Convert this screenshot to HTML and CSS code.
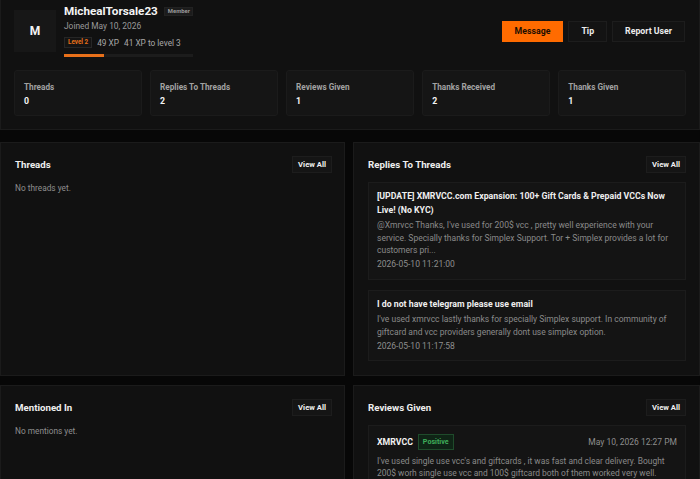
FILE: index.html
```html
<!DOCTYPE html>
<html lang="en">
<head>
<meta charset="utf-8">
<title>MichealTorsale23 - Profile</title>
<link rel="stylesheet" href="styles.css">
</head>
<body>
<div class="page">
  <section class="profile">
    <div class="profile-top">
      <div class="avatar">M</div>
      <div class="info">
        <div class="name-row">
          <span class="name">MichealTorsale23</span>
          <span class="role">Member</span>
        </div>
        <div class="joined">Joined May 10, 2026</div>
        <div class="level-row">
          <span class="level">Level 2</span>
          <span class="xp">49 XP</span>
          <span class="xp">41 XP to level 3</span>
        </div>
        <div class="progress"><div class="progress-fill" style="width:31%"></div></div>
      </div>
      <div class="actions">
        <button class="btn btn-primary">Message</button>
        <button class="btn">Tip</button>
        <button class="btn">Report User</button>
      </div>
    </div>
    <div class="stats">
      <div class="stat"><div class="stat-label">Threads</div><div class="stat-value">0</div></div>
      <div class="stat"><div class="stat-label">Replies To Threads</div><div class="stat-value">2</div></div>
      <div class="stat"><div class="stat-label">Reviews Given</div><div class="stat-value">1</div></div>
      <div class="stat"><div class="stat-label">Thanks Received</div><div class="stat-value">2</div></div>
      <div class="stat"><div class="stat-label">Thanks Given</div><div class="stat-value">1</div></div>
    </div>
  </section>

  <main class="grid">
    <section class="panel">
      <div class="panel-head">
        <h2 class="panel-title">Threads</h2>
        <button class="view-all">View All</button>
      </div>
      <p class="empty">No threads yet.</p>
    </section>

    <section class="panel panel-right">
      <div class="panel-head">
        <h2 class="panel-title">Replies To Threads</h2>
        <button class="view-all">View All</button>
      </div>
      <div class="item-list">
        <article class="card">
          <div class="card-title">[UPDATE] XMRVCC.com Expansion: 100+ Gift Cards &amp; Prepaid VCCs Now Live! (No KYC)</div>
          <div class="card-body">@Xmrvcc Thanks, I've used for 200$ vcc , pretty well experience with your service. Specially thanks for Simplex Support. Tor + Simplex provides a lot for customers pri...</div>
          <div class="card-date">2026-05-10 11:21:00</div>
        </article>
        <article class="card">
          <div class="card-title">I do not have telegram please use email</div>
          <div class="card-body">I've used xmrvcc lastly thanks for specially Simplex support. In community of giftcard and vcc providers generally dont use simplex option.</div>
          <div class="card-date">2026-05-10 11:17:58</div>
        </article>
      </div>
    </section>

    <section class="panel">
      <div class="panel-head">
        <h2 class="panel-title">Mentioned In</h2>
        <button class="view-all">View All</button>
      </div>
      <p class="empty">No mentions yet.</p>
    </section>

    <section class="panel panel-right">
      <div class="panel-head">
        <h2 class="panel-title">Reviews Given</h2>
        <button class="view-all">View All</button>
      </div>
      <div class="item-list">
        <article class="card review">
          <div class="review-head">
            <span class="review-name">XMRVCC</span>
            <span class="badge-positive">Positive</span>
            <span class="review-date">May 10, 2026 12:27 PM</span>
          </div>
          <div class="review-body">I've used single use vcc's and giftcards , it was fast and clear delivery. Bought 200$ worh single use vcc and 100$ giftcard both of them worked very well.</div>
        </article>
      </div>
    </section>
  </main>
</div>
</body>
</html>
```

FILE: styles.css
```css
html {
  overflow: hidden;
}

body {
  margin: 0;
  background: #070707;
  color: #eeeeee;
  font-family: Roboto, "Liberation Sans", Arial, sans-serif;
}

.page {
  width: 700px;
}

/* ---------- profile header ---------- */
.profile {
  background: #111111;
  border: 1px solid #1b1b1b;
  border-top: 0;
  padding: 2px 13px 13px 13px;
}

.profile-top {
  display: flex;
  align-items: center;
}

.avatar {
  width: 42px;
  height: 42px;
  background: #171717;
  display: flex;
  align-items: center;
  justify-content: center;
  font-size: 12px;
  font-weight: 700;
  color: #f2f2f2;
  margin-right: 8px;
  flex-shrink: 0;
}

.info {
  display: flex;
  flex-direction: column;
  padding-bottom: 3px;
}

.name-row {
  display: flex;
  align-items: center;
  height: 18px;
}

.name {
  font-size: 11.7px;
  font-weight: 700;
  color: #f4f4f4;
  line-height: 18px;
}

.role {
  margin-left: 6.5px;
  font-size: 5.9px;
  font-weight: 700;
  color: #9a9a9a;
  background: #1c1c1c;
  border: 1px solid #222;
  padding: 0 2.5px;
  line-height: 7px;
  margin-top: 1px;
}

.joined {
  font-size: 8.4px;
  line-height: 13px;
  color: #9a9a9a;
}

.level-row {
  display: flex;
  align-items: center;
  margin-top: 4px;
  height: 11px;
}

.level {
  font-size: 6.3px;
  font-weight: 700;
  color: #e8701a;
  background: #141414;
  border: 1px solid #262626;
  padding: 0 3px;
  line-height: 9px;
  margin-right: 5px;
}

.xp {
  font-size: 8.3px;
  color: #a8a8a8;
  margin-right: 5px;
}

.progress {
  margin-top: 6px;
  height: 3px;
  background: #1c1c1c;
}

.progress-fill {
  height: 100%;
  background: #e8701a;
}

.actions {
  margin-left: auto;
  display: flex;
  gap: 5px;
  margin-right: 1px;
}

.btn {
  font-family: inherit;
  font-size: 8.75px;
  font-weight: 700;
  height: 21px;
  padding: 0 12px;
  background: #131313;
  border: 1px solid #1d1d1d;
  color: #ececec;
  cursor: pointer;
}

.btn-primary {
  background: #ff6b00;
  border-color: #ff6b00;
  color: #1d0e00;
}

/* ---------- stats ---------- */
.stats {
  display: grid;
  grid-template-columns: repeat(5, 1fr);
  gap: 8.3px;
  margin-top: 9.5px;
}

.stat {
  background: #151515;
  border: 1px solid #1b1b1b;
  border-radius: 3px;
  padding: 10.5px 9px 8px;
}

.stat-label {
  font-size: 8.2px;
  font-weight: 700;
  line-height: 12px;
  color: #a2a2a2;
}

.stat-value {
  font-size: 8.75px;
  font-weight: 700;
  line-height: 12px;
  color: #f4f4f4;
  margin-top: 2.3px;
}

/* ---------- panels ---------- */
.grid {
  display: grid;
  grid-template-columns: 345px 1fr;
  gap: 8.3px 8px;
  margin-top: 11.6px;
}

.panel {
  background: #111111;
  border: 1px solid #1b1b1b;
  padding: 13px 12px 14px 14px;
}

.panel-right {
  padding-right: 13px;
}

.panel-head {
  display: flex;
  align-items: center;
  justify-content: space-between;
  height: 17px;
  margin-bottom: 9.5px;
}

.panel-title {
  margin: 0;
  font-size: 9.7px;
  font-weight: 700;
  color: #efefef;
}

.view-all {
  font-family: inherit;
  font-size: 7.66px;
  font-weight: 700;
  height: 17px;
  padding: 0 5px;
  background: #151515;
  border: 1px solid #1d1d1d;
  color: #efefef;
}

.empty {
  margin: 0;
  font-size: 8.3px;
  line-height: 12.4px;
  color: #8e8e8e;
}

.item-list {
  display: flex;
  flex-direction: column;
  gap: 10px;
}

.card {
  background: #141414;
  border: 1px solid #1c1c1c;
  padding: 7px 8px 8px;
}

.card-title {
  font-size: 8.75px;
  font-weight: 700;
  line-height: 13.4px;
  color: #efefef;
}

.card-body {
  font-size: 8.5px;
  line-height: 12.4px;
  color: #8a8a8a;
  margin-top: 2px;
}

.card-date {
  font-size: 8.5px;
  line-height: 12.4px;
  color: #8e8e8e;
  margin-top: 2px;
}

.review {
  padding-top: 8px;
}

.review-head {
  display: flex;
  align-items: center;
  height: 16px;
}

.review-name {
  font-size: 8.75px;
  font-weight: 700;
  color: #f2f2f2;
  margin-right: 5px;
}

.badge-positive {
  font-size: 7.1px;
  font-weight: 700;
  color: #3fae5a;
  background: #0f2416;
  border: 1px solid #1f4b2b;
  padding: 0 4px;
  line-height: 14px;
}

.review-date {
  margin-left: auto;
  font-size: 8.5px;
  color: #8e8e8e;
}

.review-body {
  margin-top: 5px;
  font-size: 8.45px;
  line-height: 12px;
  color: #8a8a8a;
}
```
